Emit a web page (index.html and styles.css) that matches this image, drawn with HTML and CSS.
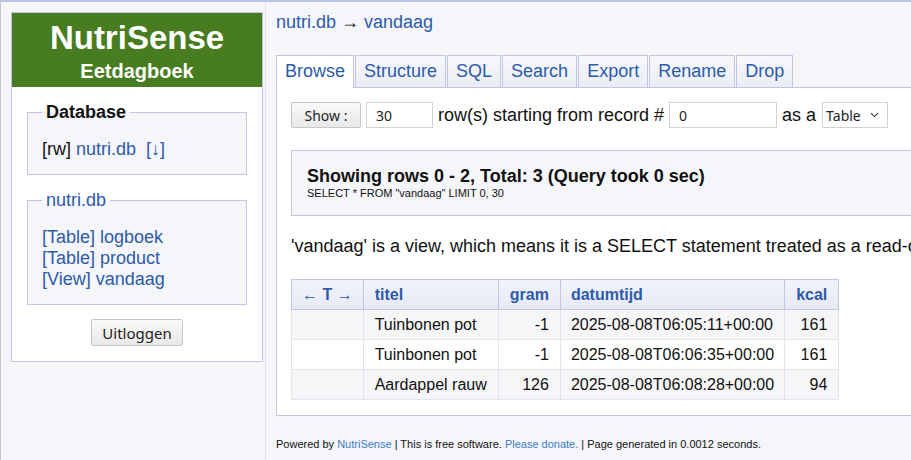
FILE: index.html
```html
<!DOCTYPE html>
<html lang="nl">
<head>
<meta charset="utf-8">
<title>NutriSense - Eetdagboek</title>
<link rel="stylesheet" href="styles.css">
</head>
<body>
<div class="page">
  <aside class="side">
    <div class="side-box">
      <div class="brand">
        <div class="brand-title">NutriSense</div>
        <div class="brand-sub">Eetdagboek</div>
      </div>
      <fieldset class="group">
        <legend class="group-legend group-legend-bold">Database</legend>
        <div class="group-body">[rw] <a class="link" href="#">nutri.db</a>&nbsp; <a class="link" href="#">[↓]</a></div>
      </fieldset>
      <fieldset class="group">
        <legend class="group-legend"><a class="link" href="#">nutri.db</a></legend>
        <div class="group-body">
          <a class="link link-block" href="#">[Table] logboek</a>
          <a class="link link-block" href="#">[Table] product</a>
          <a class="link link-block" href="#">[View] vandaag</a>
        </div>
      </fieldset>
      <div class="logout"><button class="btn btn-logout" type="button">Uitloggen</button></div>
    </div>
  </aside>
  <main class="content">
    <div class="crumb"><a class="link" href="#">nutri.db</a> → <a class="link" href="#">vandaag</a></div>
    <nav class="tabs">
      <a class="tab tab-active" href="#">Browse</a>
      <a class="tab" href="#">Structure</a>
      <a class="tab" href="#">SQL</a>
      <a class="tab" href="#">Search</a>
      <a class="tab" href="#">Export</a>
      <a class="tab" href="#">Rename</a>
      <a class="tab" href="#">Drop</a>
    </nav>
    <section class="panel">
      <div class="controls"><button class="btn btn-show" type="button">Show :</button> <input class="field field-num" type="text" value="30"> row(s) starting from record # <input class="field field-start" type="text" value="0"> as a <span class="select-wrap"><select class="field field-select"><option>Table</option><option>Chart</option></select><svg class="select-arrow" width="9" height="6" viewBox="0 0 9 6" aria-hidden="true"><path d="M1 1.2 L4.5 4.6 L8 1.2" fill="none" stroke="#333" stroke-width="1.1"/></svg></span></div>
      <div class="info">
        <div class="info-title">Showing rows 0 - 2, Total: 3 (Query took 0 sec)</div>
        <div class="info-sql">SELECT * FROM "vandaag" LIMIT 0, 30</div>
      </div>
      <p class="note">'vandaag' is a view, which means it is a SELECT statement treated as a read-only table. You may not edit or insert records.</p>
      <table class="grid">
        <thead>
          <tr>
            <th class="col-ctrl">← T →</th>
            <th>titel</th>
            <th class="num">gram</th>
            <th class="col-date">datumtijd</th>
            <th class="num">kcal</th>
          </tr>
        </thead>
        <tbody>
          <tr class="row-alt">
            <td class="col-ctrl"></td><td>Tuinbonen pot</td><td class="num">-1</td><td class="col-date">2025-08-08T06:05:11+00:00</td><td class="num">161</td>
          </tr>
          <tr>
            <td class="col-ctrl"></td><td>Tuinbonen pot</td><td class="num">-1</td><td class="col-date">2025-08-08T06:06:35+00:00</td><td class="num">161</td>
          </tr>
          <tr class="row-alt">
            <td class="col-ctrl"></td><td>Aardappel rauw</td><td class="num">126</td><td class="col-date">2025-08-08T06:08:28+00:00</td><td class="num">94</td>
          </tr>
        </tbody>
      </table>
    </section>
    <footer class="footer">Powered by <a class="link-foot" href="#">NutriSense</a> | This is free software. <a class="link-foot" href="#">Please donate.</a> | Page generated in 0.0012 seconds.</footer>
  </main>
</div>
</body>
</html>
```
FILE: styles.css
```css
html, body {
  margin: 0;
  padding: 0;
}

body {
  font-family: "Liberation Sans", Arial, sans-serif;
  font-size: 18px;
  color: #111;
  background: #f5f6f9;
  overflow: hidden;
}

.page {
  display: flex;
  align-items: stretch;
  min-height: 458px;
  border-top: 2px solid #b8c4e8;
  border-left: 1px solid #c6c6c6;
}

.link {
  color: #2c5ba9;
  text-decoration: none;
}

.link-block {
  display: block;
}

/* Sidebar */
.side {
  flex: none;
  width: 252px;
  padding: 10px 2px 0 10px;
  border-right: 1px solid #e0e1e8;
}

.side-box {
  background: #fff;
  border: 1px solid #c4c4e0;
  padding: 0 0 15px;
}

.brand {
  background: #487c20;
  color: #fff;
  text-align: center;
  font-weight: bold;
  padding: 7px 0 4px;
}

.brand-title {
  font-size: 33px;
  line-height: 36px;
}

.brand-sub {
  font-size: 20px;
  line-height: 24px;
  margin-top: 3px;
}

.group {
  margin: 15px 15px 0;
  padding: 0 14px 14px;
  border: 1px solid #c4c4e0;
  background: #f5f6fa;
  min-width: 0;
}

.group-legend {
  padding: 0 4px;
  line-height: 21px;
}

.group-legend-bold {
  font-weight: bold;
}

.group-body {
  margin-top: 16px;
  line-height: 21px;
}

.logout {
  text-align: center;
  margin-top: 14px;
}

.btn {
  font-family: "Noto Sans", "Open Sans", sans-serif;
  color: #222;
  background: linear-gradient(#f9f9f9, #e8e8e8);
  border: 1px solid #c6c6c6;
  border-radius: 2px;
  box-sizing: border-box;
  margin: 0;
}

.btn-logout {
  font-size: 15px;
  height: 27px;
  padding: 0 10px;
}

/* Content */
.content {
  flex: none;
  width: 1100px;
  padding: 10px 0 0 10px;
}

.crumb {
  line-height: 21px;
}

.tabs {
  display: flex;
  align-items: flex-end;
  gap: 1px;
  margin-top: 22px;
}

.tab {
  display: block;
  padding: 5px 8px 5px;
  line-height: 21px;
  color: #2c5ba9;
  text-decoration: none;
  border: 1px solid #c4c4e0;
  border-bottom: none;
  background: linear-gradient(#f7f8fb, #eaedf5);
}

.tab-active {
  position: relative;
  background: #fff;
  padding-bottom: 6px;
  margin-bottom: -1px;
}

.panel {
  background: #fff;
  border: 1px solid #c4c4e0;
  padding: 14px 14px 15px;
}

.controls {
  white-space: nowrap;
  height: 26px;
  line-height: 26px;
}

.btn-show {
  font-size: 14px;
  width: 70px;
  height: 26px;
  padding: 0;
  vertical-align: top;
}

.field {
  font-family: "Noto Sans", "Open Sans", sans-serif;
  font-size: 14px;
  color: #222;
  background: #fff;
  border: 1px solid #d2d2d2;
  box-sizing: border-box;
  height: 26px;
  margin: 0;
  vertical-align: top;
}

.field-num {
  width: 67px;
  padding: 0 9px;
}

.field-start {
  width: 108px;
  padding: 0 9px;
}

.select-wrap {
  position: relative;
  display: inline-block;
  vertical-align: top;
  height: 26px;
  margin-left: 1px;
}

.field-select {
  appearance: none;
  -webkit-appearance: none;
  width: 66px;
  padding: 0 0 0 3px;
  border-radius: 0;
}

.select-arrow {
  position: absolute;
  right: 9px;
  top: 10px;
  pointer-events: none;
}

.info {
  margin-top: 22px;
  background: #f5f6fa;
  border: 1px solid #c4c4e0;
  padding: 15px 15px 15px;
}

.info-title {
  font-weight: bold;
  line-height: 21px;
}

.info-sql {
  font-size: 11px;
  line-height: 13px;
}

.note {
  margin: 20px 0 22px;
  line-height: 21px;
  white-space: nowrap;
}

.grid {
  border-collapse: collapse;
  font-size: 16px;
}

.grid th,
.grid td {
  padding: 0 11px;
  line-height: 29px;
  border: 1px solid #e3e3ea;
  text-align: left;
  white-space: nowrap;
}

.grid th {
  color: #2c5ba9;
  font-weight: bold;
  background: linear-gradient(#f1f3fa, #e6e9f5);
  border-color: #c4c4e0;
}

.grid .col-ctrl {
  text-align: center;
  padding: 0 10px;
}

.grid .col-date {
  padding: 0 10px;
}

.grid .num {
  text-align: right;
}

.row-alt td {
  background: #f6f6f8;
}

.footer {
  font-size: 11px;
  line-height: 13px;
  padding-top: 22px;
  color: #111;
}

.link-foot {
  color: #3b7bc8;
  text-decoration: none;
}
```
